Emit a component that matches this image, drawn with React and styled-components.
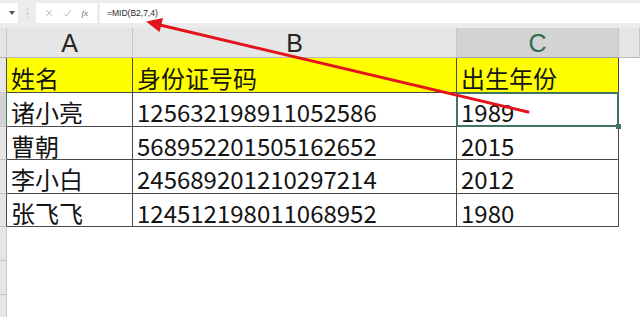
import React from "react";
import styled, { createGlobalStyle, css } from "styled-components";

const GlobalStyle = createGlobalStyle`
  html, body {
    margin: 0;
    padding: 0;
    background: #ffffff;
    overflow: hidden;
  }
`;

const Screen = styled.div`
  position: relative;
  width: 640px;
  height: 317px;
  overflow: hidden;
  background: #ffffff;
  font-family: "Noto Sans CJK SC", "Noto Sans", sans-serif;
`;

const FormulaBar = styled.div`
  display: flex;
  align-items: stretch;
  height: 20px;
  padding: 3px 0 5px;
  background: #ececec;
`;

const NameBox = styled.div`
  width: 18px;
  background: #ffffff;
  display: flex;
  align-items: center;
  justify-content: flex-end;
  padding-right: 3px;
  box-sizing: border-box;
`;

const Grip = styled.div`
  width: 18px;
  display: flex;
  align-items: center;
  justify-content: center;
`;

const FuncButtons = styled.div`
  width: 61px;
  margin-right: 3px;
  background: #ffffff;
  display: flex;
  align-items: center;
  justify-content: space-around;
  padding: 0 4px;
  box-sizing: border-box;
`;

const Fx = styled.span`
  font-family: "Liberation Serif", serif;
  font-style: italic;
  font-size: 9px;
  color: #6a6a6a;
`;

const FormulaInput = styled.div`
  flex: 1;
  background: #ffffff;
  display: flex;
  align-items: center;
  padding-left: 7px;
  font-family: "Liberation Sans", sans-serif;
  font-size: 8.5px;
  color: #2a2a2a;
`;

const Sheet = styled.div`
  display: grid;
  grid-template-columns: 7px 126px 324px 162px 1fr;
`;

const Corner = styled.div`
  height: 30px;
  background: #e6e6e6;
  border-right: 1px solid #c6c6c6;
  border-bottom: 1px solid #b8b8b8;
  box-sizing: border-box;
`;

const ColHeader = styled.div`
  height: 30px;
  box-sizing: border-box;
  display: flex;
  align-items: center;
  justify-content: center;
  padding-top: 2px;
  background: ${(p) => (p.$selected ? "#d3d3d3" : "#e6e6e6")};
  border-right: 1px solid #c6c6c6;
  border-bottom: 1px solid ${(p) => (p.$selected ? "#9aa59f" : "#b8b8b8")};
  font-family: "Liberation Sans", sans-serif;
  font-size: 25px;
  color: ${(p) => (p.$selected ? "#2e6b50" : "#262626")};
`;

const RowHeader = styled.div`
  height: ${(p) => p.$h}px;
  box-sizing: border-box;
  background: ${(p) => (p.$selected ? "#d3d3d3" : "#e6e6e6")};
  border-bottom: 1px solid #c6c6c6;
  border-right: 1px solid
    ${(p) => (p.$selected ? "#3d7a5c" : p.$table ? "#4a4a4a" : "#c6c6c6")};
`;

const Cell = styled.div`
  position: relative;
  height: ${(p) => p.$h}px;
  box-sizing: border-box;
  display: flex;
  align-items: center;
  padding: 4px 0 0 4px;
  font-size: 24px;
  color: #141414;
  white-space: nowrap;
  background: ${(p) => (p.$head ? "#ffff00" : "#ffffff")};
  ${(p) =>
    p.$border &&
    css`
      border-right: 1px solid #4a4a4a;
      border-bottom: 1px solid #4a4a4a;
    `}
  ${(p) =>
    p.$active &&
    css`
      &::after {
        content: "";
        position: absolute;
        left: -1px;
        top: -1px;
        right: -1px;
        bottom: -1px;
        border: 2px solid #3f7560;
      }
      &::before {
        content: "";
        position: absolute;
        right: -3px;
        bottom: -3px;
        width: 5px;
        height: 5px;
        background: #3f7560;
        z-index: 1;
      }
    `}
`;

const Overlay = styled.svg`
  position: absolute;
  left: 0;
  top: 0;
  pointer-events: none;
`;

const tableRows = [
  { h: 35, cells: ["姓名", "身份证号码", "出生年份"], head: true },
  { h: 34, cells: ["诸小亮", "125632198911052586", "1989"], active: true },
  { h: 33, cells: ["曹朝", "568952201505162652", "2015"] },
  { h: 34, cells: ["李小白", "245689201210297214", "2012"] },
  { h: 33, cells: ["张飞飞", "124512198011068952", "1980"] },
];

const emptyRows = [34, 34, 34];

export default function App() {
  return (
    <Screen>
      <GlobalStyle />
      <FormulaBar>
        <NameBox>
          <svg width="6" height="4" viewBox="0 0 6 4">
            <path d="M0 0 L6 0 L3 4 Z" fill="#555" />
          </svg>
        </NameBox>
        <Grip>
          <svg width="3" height="11" viewBox="0 0 3 11">
            <circle cx="1.5" cy="1.5" r="1" fill="#c4c4c4" />
            <circle cx="1.5" cy="5.5" r="1" fill="#c4c4c4" />
            <circle cx="1.5" cy="9.5" r="1" fill="#c4c4c4" />
          </svg>
        </Grip>
        <FuncButtons>
          <svg width="8" height="8" viewBox="0 0 8 8">
            <path d="M1 1 L7 7 M7 1 L1 7" stroke="#bdbdbd" strokeWidth="1" />
          </svg>
          <svg width="9" height="8" viewBox="0 0 9 8">
            <path d="M1 4.5 L3.5 7 L8 1" stroke="#bdbdbd" strokeWidth="1" fill="none" />
          </svg>
          <Fx>fx</Fx>
        </FuncButtons>
        <FormulaInput>=MID(B2,7,4)</FormulaInput>
      </FormulaBar>

      <Sheet>
        <Corner />
        <ColHeader>A</ColHeader>
        <ColHeader>B</ColHeader>
        <ColHeader $selected>C</ColHeader>
        <ColHeader />

        {tableRows.map((row, i) => (
          <React.Fragment key={i}>
            <RowHeader $h={row.h} $table $selected={row.active} />
            {row.cells.map((text, j) => (
              <Cell
                key={j}
                $h={row.h}
                $head={row.head}
                $border
                $active={row.active && j === 2}
              >
                {text}
              </Cell>
            ))}
            <Cell $h={row.h} />
          </React.Fragment>
        ))}

        {emptyRows.map((h, i) => (
          <React.Fragment key={"e" + i}>
            <RowHeader $h={h} />
            <Cell $h={h} />
            <Cell $h={h} />
            <Cell $h={h} />
            <Cell $h={h} />
          </React.Fragment>
        ))}
      </Sheet>

      <Overlay width="640" height="317" viewBox="0 0 640 317">
        <line x1="528" y1="112" x2="160" y2="25" stroke="#e3141c" strokeWidth="3" strokeLinecap="round" />
        <path d="M146 21.5 L163 18 L159.5 32 Z" fill="#e3141c" />
      </Overlay>
    </Screen>
  );
}
